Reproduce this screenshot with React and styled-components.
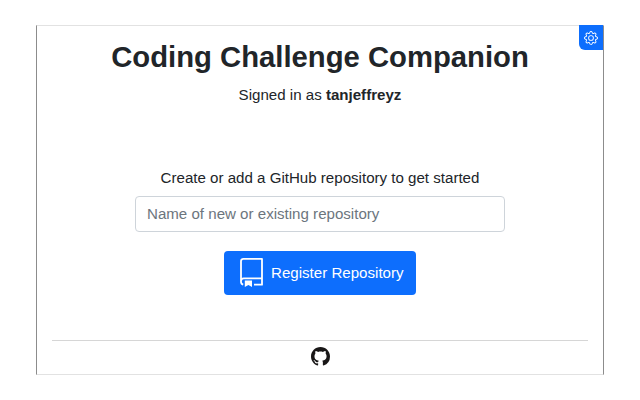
import React from "react";
import styled, { createGlobalStyle } from "styled-components";
import { BsGear, BsGithub } from "react-icons/bs";

const GlobalStyle = createGlobalStyle`
  * { box-sizing: border-box; }
  body { margin: 0; background: #fff; color: #212529; font-family: "Liberation Sans", Arial, sans-serif; }
`;

const Page = styled.div`
  display: flex;
  justify-content: center;
  height: 400px;
  padding: 25px 0;
  overflow: hidden;
`;

const Panel = styled.main`
  position: relative;
  display: flex;
  flex-direction: column;
  align-items: center;
  width: 568px;
  height: 350px;
  padding: 0 15px;
  border: solid;
  border-width: 1px;
  border-color: #e2e2e2 #8c8c8c;
`;

const SettingsButton = styled.button`
  position: absolute;
  top: -1px;
  right: 0;
  display: grid;
  place-items: center;
  width: 24px;
  height: 25px;
  padding: 0;
  border: 0;
  border-radius: 0 0 0 6px;
  background: #0d6efd;
  color: #fff;
`;

const Title = styled.h1`
  margin: 13px 0 0;
  font-size: 29.25px;
  line-height: 36px;
  font-weight: 700;
  white-space: nowrap;
`;

const Text = styled.p`
  margin: ${({ $top }) => $top}px 0 0;
  font-size: 15.1px;
  line-height: 22px;
  white-space: nowrap;
`;

const NameInput = styled.input`
  width: 370px;
  height: 36px;
  margin-top: 7px;
  padding: 0 11px 1px;
  border: 1px solid #ced4da;
  border-radius: 4px;
  font: 15.1px "Liberation Sans", Arial, sans-serif;
  &::placeholder { color: #6c757d; opacity: 1; }
`;

const RegisterButton = styled.button`
  display: flex;
  align-items: center;
  gap: 7px;
  width: 192px;
  height: 44px;
  margin-top: 19px;
  padding: 0 0 1px 16px;
  border: 0;
  border-radius: 4px;
  background: #0d6efd;
  color: #fff;
  font: 15.1px "Liberation Sans", Arial, sans-serif;
  white-space: nowrap;
`;

const Footer = styled.footer`
  display: flex;
  justify-content: center;
  align-self: stretch;
  height: 34px;
  margin-top: auto;
  padding-top: 6px;
  border-top: 1px solid #d6d6d6;
`;

function RepoIcon() {
  return (
    <svg width="24" height="29" viewBox="0 0 24 29" fill="none" stroke="#fff" strokeWidth="1.8" strokeLinejoin="round">
      <path d="M3.2 26.6C1.8 26.2 1 25.2 1 23.7V3.2C1 1.7 1.9 .9 3.4 .9H22V26.7H14M1 23.2C1 21.3 2 20.4 3.8 20.4H22" />
      <path d="M4.8 22.6H12V29L8.4 26.9L4.8 29Z" fill="#fff" stroke="none" />
    </svg>
  );
}

export default function App() {
  return (
    <>
      <GlobalStyle />
      <Page>
        <Panel>
          <SettingsButton aria-label="Settings"><BsGear size={14} /></SettingsButton>
          <Title>Coding Challenge Companion</Title>
          <Text $top={9}>Signed in as <b>tanjeffreyz</b></Text>
          <Text $top={61}>Create or add a GitHub repository to get started</Text>
          <NameInput placeholder="Name of new or existing repository" />
          <RegisterButton><RepoIcon />Register Repository</RegisterButton>
          <Footer><BsGithub size={19} color="#191717" /></Footer>
        </Panel>
      </Page>
    </>
  );
}
